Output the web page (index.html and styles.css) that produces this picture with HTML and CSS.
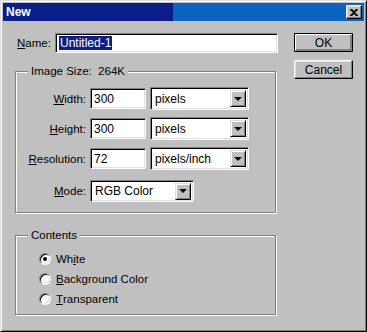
FILE: index.html
```html
<!DOCTYPE html>
<html lang="en">
    <head>
        <meta charset="UTF-8" />
        <title>New</title>
        <link rel="stylesheet" href="styles.css">
    </head>
    <body>
        <div class="window">
            <div class="titlebar">
                <span class="title">New</span>
                <span class="close-btn">
                    <svg width="8" height="7" viewBox="0 0 8 7">
                        <path d="M0 0h2l2 2 2-2h2v1l-3 2.5 3 2.5v1h-2l-2-2-2 2h-2v-1l3-2.5-3-2.5z" fill="#000"/>
                    </svg>
                </span>
            </div>

            <div class="dialog-body">
                <div class="left-col">
                    <!-- Name -->
                    <div class="name-row">
                        <label class="name-label"><u>N</u>ame:</label>
                        <div class="field name-field"><span class="selected">Untitled-1</span></div>
                    </div>

                    <!-- Image size -->
                    <div class="group size-group">
                        <span class="group-title">Image Size:&nbsp; 264K</span>
                        <div class="size-grid">
                            <label><u>W</u>idth:</label>
                            <div class="field">300</div>
                            <div class="combo"><span>pixels</span><span class="arrow-btn"><i></i></span></div>

                            <label><u>H</u>eight:</label>
                            <div class="field">300</div>
                            <div class="combo"><span>pixels</span><span class="arrow-btn"><i></i></span></div>

                            <label><u>R</u>esolution:</label>
                            <div class="field">72</div>
                            <div class="combo"><span>pixels/inch</span><span class="arrow-btn"><i></i></span></div>

                            <label class="mode-label"><u>M</u>ode:</label>
                            <div class="combo mode-combo"><span>RGB Color</span><span class="arrow-btn"><i></i></span></div>
                        </div>
                    </div>

                    <!-- Contents -->
                    <div class="group contents-group">
                        <span class="group-title">Contents</span>
                        <div class="radio-list">
                            <div class="radio-row"><span class="radio checked"></span>Wh<u>i</u>te</div>
                            <div class="radio-row"><span class="radio"></span><u>B</u>ackground Color</div>
                            <div class="radio-row"><span class="radio"></span><u>T</u>ransparent</div>
                        </div>
                    </div>
                </div>

                <div class="right-col">
                    <div class="btn default-btn"><span>OK</span></div>
                    <div class="btn"><span>Cancel</span></div>
                </div>
            </div>
        </div>
    </body>
</html>
```

FILE: styles.css
```css
body {
    margin: 0;
    font-family: "Liberation Sans", Arial, sans-serif;
    font-size: 11.5px;
    color: #000;
    background: #c0c0c0;
}
u {
    text-decoration: underline;
    text-underline-offset: 1px;
}
.window {
    width: 367px;
    height: 332px;
    box-sizing: border-box;
    background: #c0c0c0;
    border: 1px solid;
    border-color: #dfdfdf #000 #000 #dfdfdf;
    box-shadow: inset 1px 1px #fff, inset -1px -1px #808080;
    padding: 2px;
}
.titlebar {
    height: 18px;
    display: flex;
    align-items: center;
    justify-content: space-between;
    padding: 0 2px 0 3px;
    background: linear-gradient(to right, #0a1e8a 0, #0a1e8a 170px, #0c63c0 170px);
}
.title {
    color: #fff;
    font-weight: bold;
    font-size: 12px;
}
.close-btn {
    width: 16px;
    height: 14px;
    box-sizing: border-box;
    display: flex;
    align-items: center;
    justify-content: center;
    background: #c0c0c0;
    border: 1px solid;
    border-color: #fff #000 #000 #fff;
    box-shadow: inset -1px -1px #808080, inset 1px 1px #dfdfdf;
}

.dialog-body {
    display: flex;
    padding: 12px 0 0 12px;
}
.left-col {
    width: 263px;
}
.right-col {
    margin-left: 16px;
    display: flex;
    flex-direction: column;
    gap: 8px;
}

/* sunken edit field */
.field {
    height: 21px;
    box-sizing: border-box;
    background: #fff;
    border: 1px solid;
    border-color: #808080 #fff #fff #808080;
    box-shadow: inset 1px 1px #000, inset -1px -1px #dfdfdf;
    padding: 0 3px;
    display: flex;
    align-items: center;
    font-size: 12px;
}

.name-row {
    display: flex;
    align-items: center;
    height: 20px;
}
.name-label {
    width: 38px;
    padding-left: 2px;
}
.name-field {
    width: 223px;
    height: 20px;
}
.selected {
    background: #0a1e8a;
    color: #fff;
    padding: 0 1px;
}

/* etched group box */
.group {
    position: relative;
    width: 261px;
    box-sizing: border-box;
    border: 1px solid #808080;
    box-shadow: inset 1px 1px #fff, 1px 1px #fff;
}
.group-title {
    position: absolute;
    top: -7px;
    left: 12px;
    padding: 0 3px;
    background: #c0c0c0;
}
.size-group {
    margin-top: 18px;
    height: 142px;
    padding-top: 15px;
}
.size-grid {
    display: grid;
    grid-template-columns: 70px 56px 99px;
    column-gap: 4px;
    row-gap: 7px;
    align-items: center;
}
.size-grid label {
    text-align: right;
}
.mode-label {
    margin-top: 3px;
}
.combo {
    height: 23px;
    box-sizing: border-box;
    background: #fff;
    border: 1px solid;
    border-color: #808080 #fff #fff #808080;
    box-shadow: inset 1px 1px #000, inset -1px -1px #dfdfdf;
    display: flex;
    align-items: center;
    justify-content: space-between;
    padding: 0 2px 0 4px;
    font-size: 12px;
}
.mode-combo {
    grid-column: span 2;
    width: 104px;
    height: 22px;
    margin-top: 3px;
}
.arrow-btn {
    width: 16px;
    height: 17px;
    box-sizing: border-box;
    background: #c0c0c0;
    border: 1px solid;
    border-color: #dfdfdf #000 #000 #dfdfdf;
    box-shadow: inset 1px 1px #fff, inset -1px -1px #808080;
    display: flex;
    align-items: center;
    justify-content: center;
}
.arrow-btn i {
    width: 0;
    height: 0;
    border-left: 4px solid transparent;
    border-right: 4px solid transparent;
    border-top: 4px solid #000;
}

.contents-group {
    margin-top: 22px;
    height: 80px;
    padding: 13px 0 0 23px;
}
.radio-list {
    display: flex;
    flex-direction: column;
}
.radio-row {
    height: 20px;
    display: flex;
    align-items: center;
}
.radio {
    width: 12px;
    height: 12px;
    box-sizing: border-box;
    border-radius: 50%;
    background: #fff;
    border: 1px solid;
    border-color: #808080 #fff #fff #808080;
    box-shadow: inset 1px 1px #000, inset -1px -1px #dfdfdf;
    margin-right: 5px;
    position: relative;
}
.radio.checked::after {
    content: "";
    position: absolute;
    left: 3px;
    top: 3px;
    width: 4px;
    height: 4px;
    border-radius: 50%;
    background: #000;
}

.btn {
    width: 59px;
    height: 19px;
    box-sizing: border-box;
    background: #c0c0c0;
    border: 1px solid;
    border-color: #fff #000 #000 #fff;
    box-shadow: inset -1px -1px #808080, inset 1px 1px #dfdfdf;
    display: flex;
    align-items: center;
    justify-content: center;
    font-size: 12px;
}
.default-btn {
    border-color: #000;
    box-shadow: inset 1px 1px #fff, inset -1px -1px #808080, inset -2px -2px #808080;
}
```
